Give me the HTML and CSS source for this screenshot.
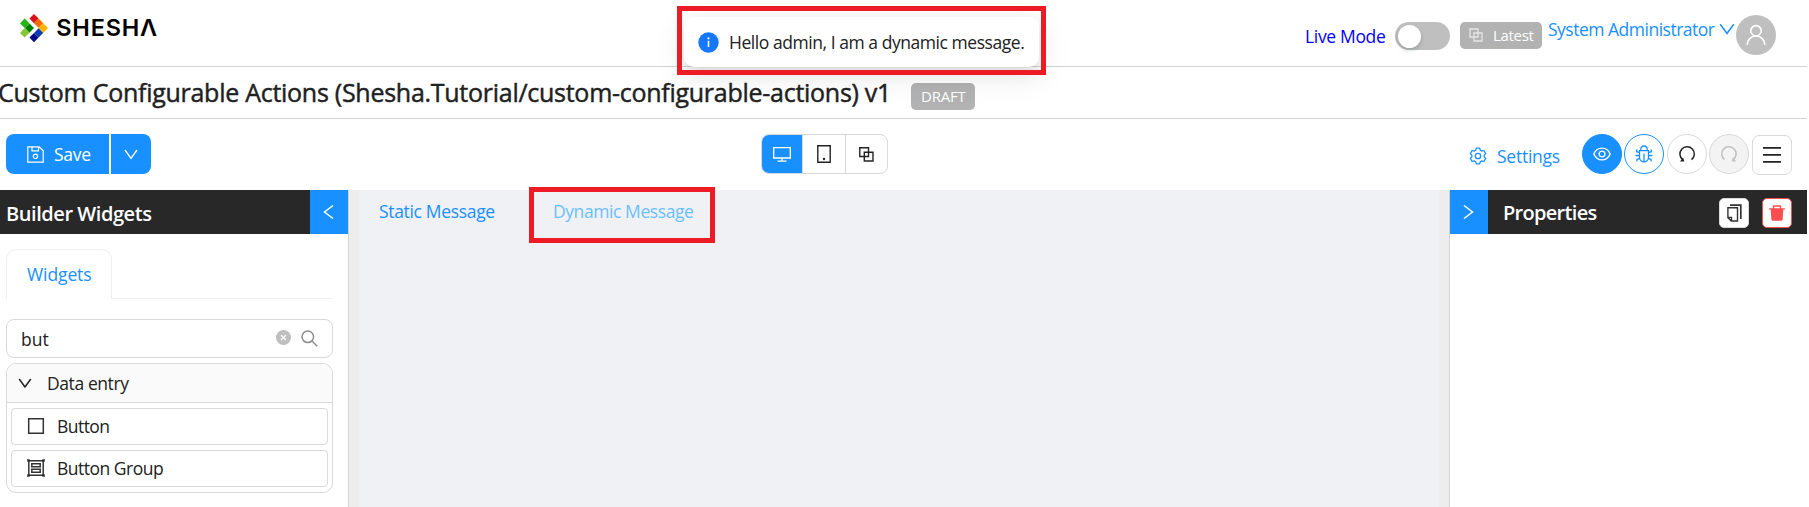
FILE: index.html
```html
<!DOCTYPE html>
<html lang="en">
<head>
<meta charset="utf-8">
<title>Custom Configurable Actions</title>
<link rel="stylesheet" href="styles.css">
</head>
<body>
<div class="page">
  <header class="topbar">
    <svg class="logo" width="140" height="32" viewBox="0 0 140 32">
      <path fill="#d6141a" d="M14 3l4.6 4.6-4.6 4.6-4.6-4.6z"/>
      <path fill="#ff6a00" d="M18.6 7.6l4.6 4.6-4.6 4.6-4.6-4.6z"/>
      <path fill="#ffb400" d="M23.2 12.2l4.8 4.9-4.8 4.9-4.6-4.9z"/>
      <path fill="#0a3cb4" d="M18.6 17.2l4.6 4.8-4.6 4.6-4.6-4.6z"/>
      <path fill="#000c8c" d="M14 21.9l4.6 4.7-4.6 4.6-4.6-4.6z"/>
      <path fill="#24b414" d="M4.6 7.6l4.8 4.7-4.6 4.8-4.8-4.6z"/>
      <path fill="#008200" d="M9.4 12.4l4.6 4.7-4.6 4.7-4.6-4.7z"/>
      <path fill="#82c832" d="M4.8 17.1l4.6 4.7-4.8 4.8-4.6-4.6z"/>
      <text class="logo-text" x="36.2" y="25" textLength="101">SHESHΛ</text>
    </svg>
    <div class="mode">
      <span class="mode-label">Live Mode</span>
      <span class="switch"><span class="knob"></span></span>
      <span class="tag latest">
        <svg width="14" height="14" viewBox="0 0 14 14" fill="none" stroke="#e6e6e6" stroke-width="1.3"><path d="M1 1h8v8h-8zM5 5h8v8h-8z"/></svg>
        <span>Latest</span>
      </span>
    </div>
    <div class="user">
      <span class="user-name">System Administrator</span>
      <svg class="user-caret" width="16" height="13" viewBox="0 0 16 13" fill="none" stroke="#1890ff" stroke-width="1.5"><path d="M1.2 1.2L8 10.4l6.8-9.2"/></svg>
      <span class="avatar"><svg width="22" height="24" viewBox="0 0 22 24" fill="none" stroke="#fff" stroke-width="1.7"><circle cx="11" cy="7.8" r="5.2"/><path d="M2.2 22c0-5.200 3.900-9 8.800-9s8.800 3.800 8.800 9"/></svg></span>
    </div>
  </header>

  <div class="titlebar">
    <h1 class="title">Custom Configurable Actions (Shesha.Tutorial/custom-configurable-actions) v1</h1>
    <span class="tag draft">DRAFT</span>
  </div>

  <div class="toolbar">
    <div class="save-group">
      <button class="save">
        <svg width="17" height="17" viewBox="0 0 17 17" fill="none" stroke="#fff" stroke-width="1.2"><path d="M.8.8h11.400l4 4v11.400H.8zM5 .8v4h6.500v-4"/><circle cx="8.400" cy="10.300" r="2.200"/></svg>
        <span>Save</span>
      </button>
      <button class="save-more"><svg width="14" height="11" viewBox="0 0 14 11" fill="none" stroke="#fff" stroke-width="1.300"><path d="M1 1l6 8.400L13 1"/></svg></button>
    </div>
    <div class="devices">
      <span class="device active"><svg width="18" height="15" viewBox="0 0 18 15" fill="none" stroke="#fff" stroke-width="1.300"><path d="M.7.7h16.600v10.300H.7zM9 11v3M4.500 14.200h9"/></svg></span>
      <span class="device"><svg width="14" height="18" viewBox="0 0 14 18" fill="none" stroke="#222" stroke-width="1.400"><path d="M.8.8h12.400v16.400H.8z"/><circle cx="7" cy="14" r=".5"/></svg></span>
      <span class="device"><svg width="15" height="15" viewBox="0 0 15 15" fill="none" stroke="#222" stroke-width="1.400"><path d="M.8.8h8.700v8.700H.8zM5.300 5.300H14V14H5.300z"/></svg></span>
    </div>
    <div class="tools">
      <span class="settings">
        <svg width="18" height="18" viewBox="-9 -9 18 18" fill="none" stroke="#1890ff" stroke-width="1.300" stroke-linejoin="round"><path d="M1.700-7.900L2.300-5.700 3.800-4.900 5.900-5.500 7.700-2.400 6.100-.8V.8L7.700 2.400 5.900 5.500 3.800 4.900 2.300 5.700 1.700 7.900h-3.400L-2.300 5.700-3.800 4.900-5.900 5.500-7.700 2.400-6.100.8V-.8L-7.700-2.400-5.900-5.500-3.800-4.900-2.300-5.700-1.700-7.900z"/><circle r="2.700"/></svg>
        <span>Settings</span>
      </span>
      <span class="round primary"><svg width="18" height="14" viewBox="0 0 18 14" fill="none" stroke="#fff" stroke-width="1.400"><path d="M.8 7C2.600 3 5.500 1.100 9 1.100S15.400 3 17.200 7C15.400 11 12.500 12.900 9 12.900S2.600 11 .8 7z"/><circle cx="9" cy="7" r="2.900"/></svg></span>
      <span class="round outline"><svg width="18" height="18" viewBox="0 0 18 18" fill="none" stroke="#1890ff" stroke-width="1.300"><path d="M4.500 5.700h9v6.600a4.500 4.500 0 0 1-9 0zM5.800 5.500V4.200a3.200 3.200 0 0 1 6.400 0v1.300M9 8.500v8M1.700 4.500v2.200l2.800 1M16.300 4.500v2.200l-2.800 1M.6 10.500h3.900M17.400 10.500h-3.900M1.900 16.500v-2l2.800-1.200M16.100 16.500v-2l-2.800-1.200"/></svg></span>
      <span class="round undo"><svg width="18" height="18" viewBox="0 0 18 18" fill="none" stroke="#222" stroke-width="1.500"><path d="M5 14.900A7.200 7.200 0 1 1 13.500 14.700"/><path fill="#222" stroke="none" d="M2 16.600l4.400-.1-1.400-4z"/></svg></span>
      <span class="round redo"><svg width="18" height="18" viewBox="0 0 18 18" fill="none" stroke="#bfbfbf" stroke-width="1.500"><path d="M13 14.900A7.200 7.200 0 1 0 4.500 14.700"/><path fill="#bfbfbf" stroke="none" d="M16 16.600l-4.400-.1 1.400-4z"/></svg></span>
      <span class="menu"><svg width="18" height="16" viewBox="0 0 18 16"><path fill="#222" d="M0 0h18v1.800H0zM0 7h18v1.800H0zM0 14h18v1.800H0z"/></svg></span>
    </div>
  </div>

  <main class="workspace">
    <aside class="widgets">
      <div class="panel-head">
        <h2 class="panel-title builder">Builder Widgets</h2>
        <span class="collapse"><svg width="11" height="16" viewBox="0 0 11 16" fill="none" stroke="#fff" stroke-width="1.500"><path d="M10 1.500L1.500 8l8.500 6.500"/></svg></span>
      </div>
      <div class="tabs"><span class="tab">Widgets</span></div>
      <div class="search">
        <span class="query">but</span>
        <svg class="clear" width="15" height="15" viewBox="0 0 15 15"><circle cx="7.500" cy="7.500" r="7.500" fill="#bfbfbf"/><path d="M5 5l5 5M10 5l-5 5" stroke="#fff" stroke-width="1.300"/></svg>
        <svg width="17" height="17" viewBox="0 0 17 17" fill="none" stroke="#8c8c8c" stroke-width="1.500"><circle cx="6.800" cy="6.800" r="5.800"/><path d="M11 11l5.200 5.200"/></svg>
      </div>
      <section class="group">
        <div class="group-head">
          <svg width="14" height="11" viewBox="0 0 14 11" fill="none" stroke="#222" stroke-width="1.500"><path d="M1.200 1L7 9 12.800 1"/></svg>
          <span>Data entry</span>
        </div>
        <div class="group-body">
          <div class="widget"><svg width="18" height="18" viewBox="0 0 18 18" fill="none" stroke="#333" stroke-width="1.500"><path d="M1.700 1.700h14.600v14.600H1.700z"/></svg><span class="w-button">Button</span></div>
          <div class="widget"><svg width="18" height="18" viewBox="0 0 18 18" fill="none" stroke="#333" stroke-width="1.500"><path d="M1.800 1.800h14.400v14.400H1.800zM4.800 4.800h8.400v3H4.800zM4.800 10.200h8.400v3H4.800z"/><path fill="#333" stroke="none" d="M.2.2h2.600v2.600H.2zM15.200.2h2.600v2.600h-2.600zM.2 15.200h2.600v2.600H.2zM15.200 15.200h2.600v2.600h-2.600z"/></svg><span class="w-group">Button Group</span></div>
        </div>
      </section>
    </aside>

    <section class="canvas">
      <a class="static-link">Static Message</a>
      <a class="dynamic-link">Dynamic Message</a>
    </section>

    <aside class="properties">
      <div class="panel-head">
        <span class="collapse"><svg width="11" height="16" viewBox="0 0 11 16" fill="none" stroke="#fff" stroke-width="1.500"><path d="M1 1.500L9.500 8 1 14.500"/></svg></span>
        <h2 class="panel-title props">Properties</h2>
        <span class="mini copy"><svg width="15" height="18" viewBox="0 0 15 18" fill="none" stroke="#333" stroke-width="1.400"><path d="M.9 3.800h9.600v13.200H4.300L.9 13.600zM1 13.400h3.500V17"/><path stroke-width="1.700" d="M3 1.100h10.800v13.900"/></svg></span>
        <span class="mini delete"><svg width="16" height="16" viewBox="0 0 16 16" fill="#ff4d4f"><path d="M.5 3.200h3.300V1.300Q3.800.3 4.800.3h6.400q1 0 1 1v1.900h3.300q.5 0 .5.600v.8h-1.700l-.7 10q-.1 1.100-1.200 1.100H3.600q-1.100 0-1.200-1.100l-.7-10H0v-.8q0-.6.500-.6zM5.200 1.700v1.500h5.600V1.700z" fill-rule="evenodd"/></svg></span>
      </div>
    </aside>
  </main>

  <div class="message">
    <svg width="21" height="21" viewBox="0 0 21 21"><circle cx="10.500" cy="10.500" r="10.200" fill="#1677ff"/><path fill="#fff" d="M9.700 8.800h1.600V15H9.700z"/><circle cx="10.500" cy="6.300" r="1.100" fill="#fff"/></svg>
    <span>Hello admin, I am a dynamic message.</span>
  </div>
  <div class="mark mark-message"></div>
  <div class="mark mark-link"></div>
</div>
</body>
</html>
```
FILE: styles.css
```css
* { box-sizing: border-box; }

body {
  margin: 0;
  background: #fff;
  color: #212121;
  font: 17.5px/28px "Open Sans", "Noto Sans", sans-serif;
  white-space: nowrap;
}

svg { display: block; flex: none; }
h1, h2 { margin: 0; }
button { border: 0; padding: 0; font: inherit; color: inherit; }

.page {
  position: relative;
  display: flex;
  flex-direction: column;
  width: 1809px;
  height: 507px;
  padding-right: 2px;
  overflow: hidden;
}

/* Top bar */
.topbar {
  display: flex;
  align-items: flex-start;
  height: 67px;
  padding: 11px 31px 0 20px;
  border-bottom: 1px solid #d3d3d3;
}
.logo-text { font: 600 23.5px "Inter", sans-serif; fill: #000; }

.mode { display: flex; align-items: center; height: 50px; margin-left: auto; }
.mode-label { width: 90px; margin-top: -1px; color: #00f; letter-spacing: -.33px; }
.switch { width: 55px; height: 28px; border-radius: 14px; background: #bfbfbf; }
.knob {
  display: block;
  width: 23px;
  height: 23px;
  margin: 2.500px;
  border-radius: 50%;
  background: #fff;
  box-shadow: 0 2px 4px rgba(0, 35, 11, .2);
}
.tag {
  display: flex;
  align-items: center;
  height: 27px;
  padding-bottom: 2px;
  border-radius: 5px;
  background: #b2b2b2;
  color: #fff;
  font-size: 15px;
}
.latest { width: 82px; margin: -1px 0 0 10px; padding-left: 9px; gap: 10px; letter-spacing: -.32px; }

.user { display: flex; align-items: flex-start; margin-left: 6px; color: #1890ff; }
.user-name { width: 171px; margin-top: 4px; letter-spacing: -.5px; }
.user-caret { margin-top: 12px; }
.avatar {
  display: grid;
  place-items: center;
  width: 40px;
  height: 40px;
  margin: 4px 0 0 1px;
  border-radius: 50%;
  background: #bfbfbf;
}

/* Title */
.titlebar {
  display: flex;
  align-items: center;
  height: 52px;
  border-bottom: 1px solid #d3d3d3;
}
.title {
  width: 911px;
  margin: -1px 0 0;
  font-size: 25px;
  font-weight: 500;
  letter-spacing: -.27px;
  text-indent: -2px;
  line-height: 40px;
  -webkit-text-stroke: .45px #212121;
}
.draft { width: 64px; margin-top: 8px; padding-left: 10px; letter-spacing: -.23px; }

/* Toolbar */
.toolbar {
  display: flex;
  align-items: flex-start;
  height: 71px;
  padding: 15px 15px 0 6px;
}
.save-group { display: flex; gap: 2px; width: 755px; height: 40px; color: #fff; }
.save, .save-more { display: flex; align-items: center; background: #1890ff; }
.save { width: 103px; padding-left: 21px; gap: 10px; border-radius: 8px 0 0 8px; letter-spacing: -.3px; }
.save-more { width: 40px; justify-content: center; border-radius: 0 8px 8px 0; }

.devices { display: flex; width: 127px; height: 40px; border: 1px solid #d9d9d9; border-radius: 8px; overflow: hidden; }
.device { display: grid; place-items: center; flex: 1; border-left: 1px solid #d9d9d9; }
.device.active { margin: -1px 0 -1px -1px; border: 0; background: #1890ff; }

.tools { display: flex; align-items: center; height: 40px; margin-left: auto; }
.settings { display: flex; align-items: center; gap: 10px; width: 113px; padding-top: 3px; color: #1890ff; letter-spacing: -.25px; }
.round {
  display: grid;
  place-items: center;
  width: 40px;
  height: 40px;
  margin-right: 2px;
  border: 1px solid #d9d9d9;
  border-radius: 50%;
}
.primary { border-color: #1890ff; background: #1890ff; }
.outline { margin-right: 3px; border-color: #1890ff; }
.redo { margin-right: 3px; background: #f3f3f3; }
.menu {
  display: grid;
  place-items: center;
  width: 40px;
  height: 40px;
  margin-top: 2px;
  border: 1px solid #d9d9d9;
  border-radius: 7px;
}

/* Workspace */
.workspace { display: flex; flex: 1; background: #f0f1f5; }
.widgets, .properties { background: #fff; }
.widgets { width: 349px; border-right: 1px solid #d3d3d3; }
.panel-head { display: flex; align-items: center; height: 44px; background: #282828; }
.panel-title { color: #fff; font-size: 20px; font-weight: 600; }
.builder { flex: 1; padding: 3px 0 0 6px; letter-spacing: -.44px; }
.collapse { display: grid; place-items: center; width: 38px; height: 44px; padding-right: 1px; background: #1890ff; }

.tabs { display: flex; height: 65px; margin: 0 15px 0 6px; padding-top: 15px; border-bottom: 1px solid #f0f0f0; }
.tab {
  width: 106px;
  height: 50px;
  padding: 10px 0 0 20px;
  border: 1px solid #f0f0f0;
  border-bottom: 0;
  border-radius: 10px 10px 0 0;
  background: #fff;
  color: #1890ff;
  letter-spacing: -.1px;
}

.search {
  display: flex;
  align-items: center;
  height: 39px;
  margin: 20px 15px 5px 6px;
  padding: 0 14px;
  border: 1px solid #d9d9d9;
  border-radius: 8px;
}
.query { flex: 1; padding-top: 1px; }
.clear { margin: -2px 10px 0 0; }

.group { width: 327px; margin-left: 6px; border: 1px solid #d9d9d9; border-radius: 10px; overflow: hidden; }
.group-head {
  display: flex;
  align-items: center;
  gap: 15px;
  height: 39px;
  padding-left: 11px;
  border-bottom: 1px solid #d9d9d9;
  background: #fafafa;
  letter-spacing: -.41px;
}
.group-body { display: flex; flex-direction: column; gap: 5px; padding: 5px 4px; }
.widget {
  display: flex;
  align-items: center;
  gap: 12px;
  height: 37px;
  padding: 0 0 2px 15px;
  border: 1px solid #d9d9d9;
  border-radius: 4px;
}
.w-button { letter-spacing: -.55px; }
.w-group { letter-spacing: -.5px; }

.canvas { display: flex; flex: 1; border: solid #ededed; border-width: 0 10px; padding: 7px 0 0 20px; color: #1890ff; }
.static-link { width: 174px; letter-spacing: -.33px; }
.dynamic-link { color: #69c0ff; letter-spacing: -.42px; }

.properties { width: 358px; border-left: 1px solid #d3d3d3; }
.props { flex: 1; padding: 2px 0 0 15px; letter-spacing: -.7px; }
.mini { display: grid; place-items: center; width: 30px; height: 30px; border: 1px solid #d9d9d9; border-radius: 5px; background: #fff; }
.copy { margin: 2px 13px 0 0; }
.delete { margin: 2px 15px 0 0; border-color: #ff4d4f; }

/* Message and highlight frames */
.message {
  position: absolute;
  left: 684px;
  top: 17px;
  display: flex;
  align-items: center;
  gap: 10px;
  width: 355px;
  height: 50px;
  padding-left: 14px;
  border-radius: 10px;
  background: #fff;
  box-shadow: 0 6px 16px rgba(0, 0, 0, .08), 0 3px 6px -4px rgba(0, 0, 0, .12), 0 9px 28px 8px rgba(0, 0, 0, .05);
  letter-spacing: -.45px;
}
.mark { position: absolute; border: 5px solid #ed1c24; }
.mark-message { left: 677px; top: 6px; width: 369px; height: 69px; }
.mark-link { left: 529px; top: 187px; width: 186px; height: 56px; }
```
